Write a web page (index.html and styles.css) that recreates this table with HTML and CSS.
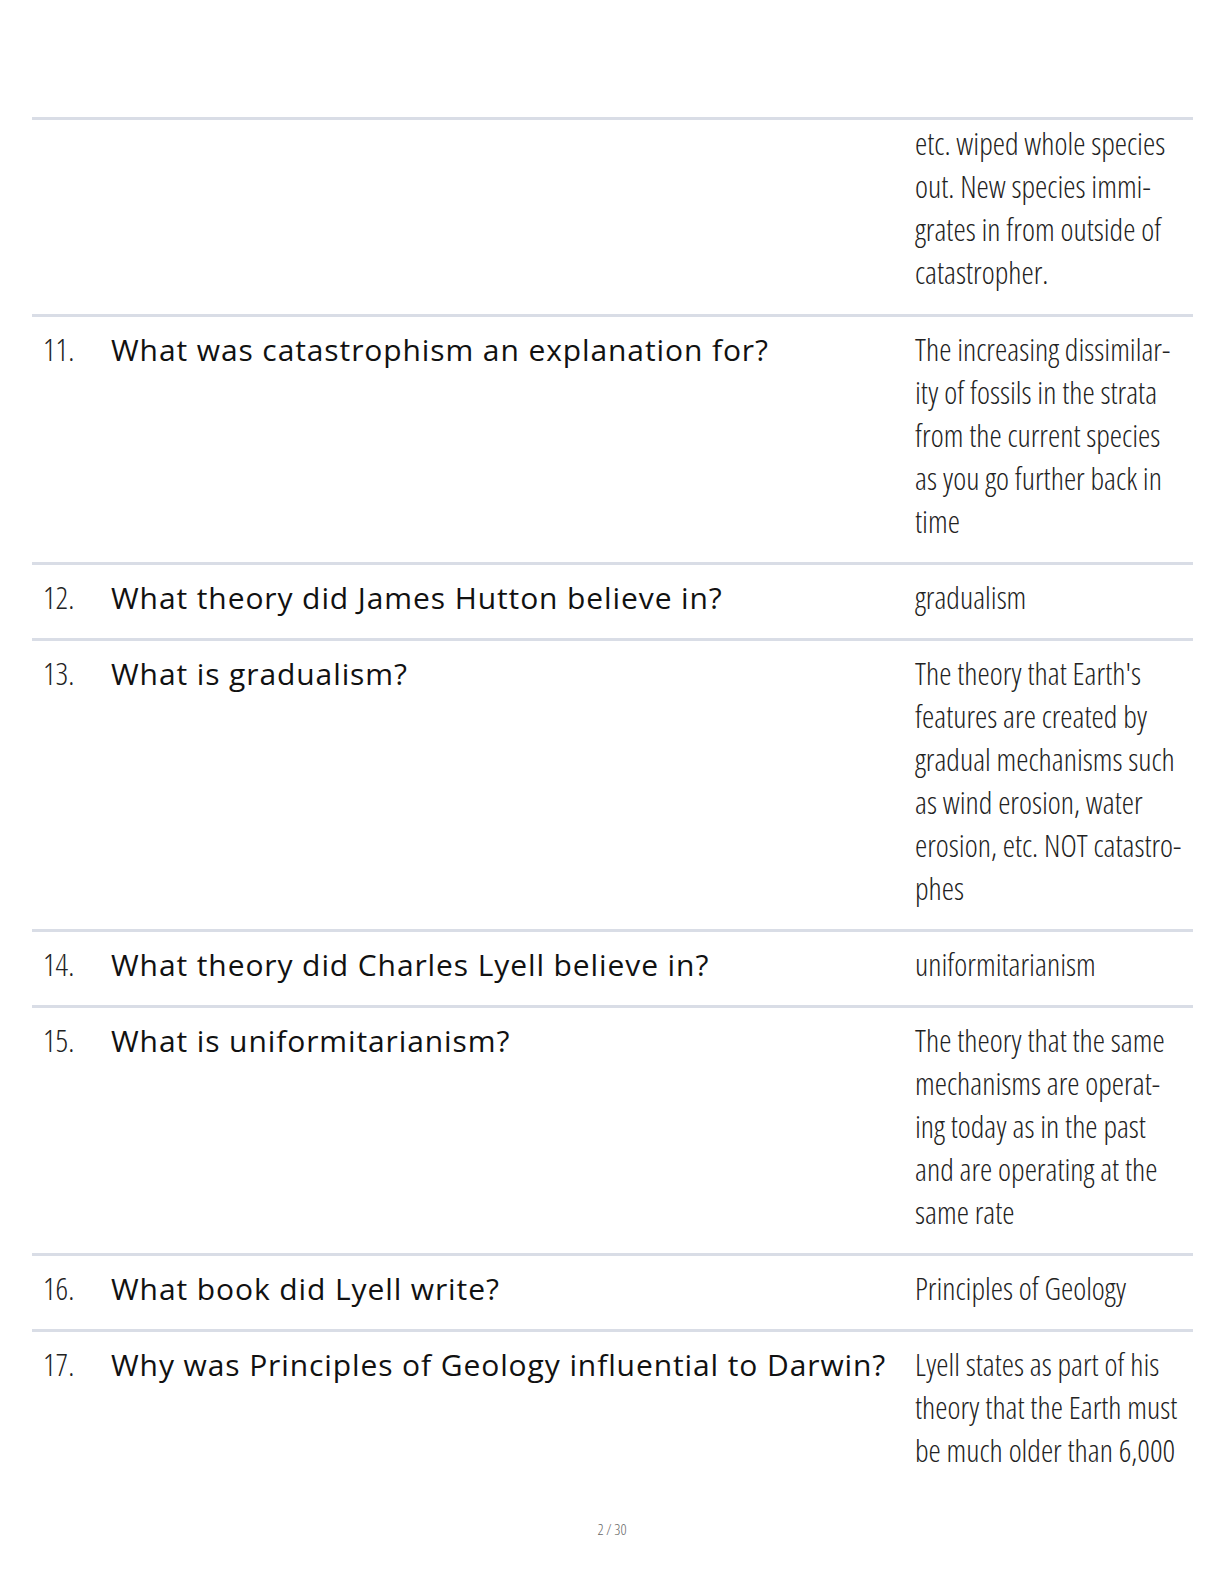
FILE: index.html
```html
<!DOCTYPE html>
<html lang="en">
<head>
<meta charset="utf-8">
<link rel="stylesheet" href="styles.css">
</head>
<body>
<div class="page">
  <div class="qa">
    <div class="row cont">
      <div class="num"></div>
      <div class="q"></div>
      <div class="a">etc. wiped whole species<br>out. New species immi-<br>grates in from outside of<br>catastropher.</div>
    </div>
    <div class="row">
      <div class="num">11.</div>
      <div class="q">What was catastrophism an explanation for?</div>
      <div class="a">The increasing dissimilar-<br>ity of fossils in the strata<br>from the current species<br>as you go further back in<br>time</div>
    </div>
    <div class="row">
      <div class="num">12.</div>
      <div class="q">What theory did James Hutton believe in?</div>
      <div class="a">gradualism</div>
    </div>
    <div class="row">
      <div class="num">13.</div>
      <div class="q">What is gradualism?</div>
      <div class="a">The theory that Earth's<br>features are created by<br>gradual mechanisms such<br>as wind erosion, water<br>erosion, etc. NOT catastro-<br>phes</div>
    </div>
    <div class="row">
      <div class="num">14.</div>
      <div class="q">What theory did Charles Lyell believe in?</div>
      <div class="a">uniformitarianism</div>
    </div>
    <div class="row">
      <div class="num">15.</div>
      <div class="q">What is uniformitarianism?</div>
      <div class="a">The theory that the same<br>mechanisms are operat-<br>ing today as in the past<br>and are operating at the<br>same rate</div>
    </div>
    <div class="row">
      <div class="num">16.</div>
      <div class="q">What book did Lyell write?</div>
      <div class="a">Principles of Geology</div>
    </div>
    <div class="row last">
      <div class="num">17.</div>
      <div class="q">Why was Principles of Geology influential to Darwin?</div>
      <div class="a">Lyell states as part of his<br>theory that the Earth must<br>be much older than 6,000</div>
    </div>
  </div>
  <div class="pagenum">2 / 30</div>
</div>
</body>
</html>
```

FILE: styles.css
```css
html, body {
  margin: 0;
  padding: 0;
  background: #ffffff;
}

.page {
  width: 1224px;
  height: 1584px;
  box-sizing: border-box;
  padding: 117px 31px 0 32px;
  position: relative;
  color: #111111;
}

.qa {
  display: flex;
  flex-direction: column;
}

.row {
  display: grid;
  grid-template-columns: 68px 804px 1fr;
  padding: 11px 0 19px 11px;
  border-top: 3px solid #d9dde6;
  line-height: 43px;
}

.row.cont {
  padding-top: 2px;
  padding-bottom: 20px;
}

.row.last {
  padding-bottom: 0;
}

.num, .a {
  font-family: "Open Sans", sans-serif;
  font-weight: 300;
  font-stretch: 75%;
  font-size: 31px;
  white-space: nowrap;
  color: #222222;
}

.q {
  font-family: "Open Sans", sans-serif;
  font-weight: 400;
  font-size: 30px;
  letter-spacing: 0.9px;
  white-space: nowrap;
}

.pagenum {
  position: absolute;
  left: 0;
  right: 0;
  top: 1519px;
  text-align: center;
  font-family: "Open Sans", sans-serif;
  font-weight: 300;
  font-stretch: 75%;
  font-size: 15px;
  color: #666666;
}
```
